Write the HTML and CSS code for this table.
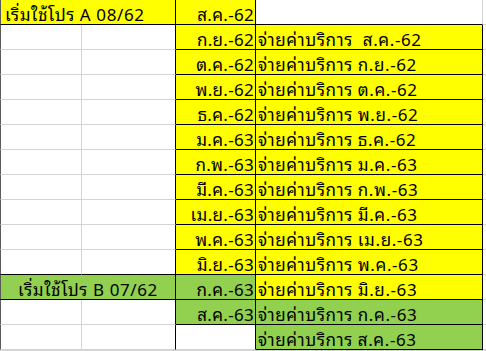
FILE: index.html
```html
<!DOCTYPE html>
<html lang="th">
<head>
<meta charset="utf-8">
<link rel="stylesheet" href="styles.css">
</head>
<body>
<div class="sheet">
  <div class="c first span2 yellow bb bk-r txt-left">เริ่มใช้โปร A 08/62</div>
  <div class="c yellow date bb bk-r">ส.ค.-62</div>
  <div class="c colD bb gray-r"></div>
  <div class="c colE"></div>

  <div class="c first"></div><div class="c bk-r"></div><div class="c yellow date bb bk-r">ก.ย.-62</div><div class="c yellow pay bb bk-r">จ่ายค่าบริการ  ส.ค.-62</div><div class="c colE"></div>
  <div class="c first"></div><div class="c bk-r"></div><div class="c yellow date bb bk-r">ต.ค.-62</div><div class="c yellow pay bb bk-r">จ่ายค่าบริการ ก.ย.-62</div><div class="c colE"></div>
  <div class="c first"></div><div class="c bk-r"></div><div class="c yellow date bb bk-r">พ.ย.-62</div><div class="c yellow pay bb bk-r">จ่ายค่าบริการ ต.ค.-62</div><div class="c colE"></div>
  <div class="c first"></div><div class="c bk-r"></div><div class="c yellow date bb bk-r">ธ.ค.-62</div><div class="c yellow pay bb bk-r">จ่ายค่าบริการ พ.ย.-62</div><div class="c colE"></div>
  <div class="c first"></div><div class="c bk-r"></div><div class="c yellow date bb bk-r">ม.ค.-63</div><div class="c yellow pay bb bk-r">จ่ายค่าบริการ ธ.ค.-62</div><div class="c colE"></div>
  <div class="c first"></div><div class="c bk-r"></div><div class="c yellow date bb bk-r">ก.พ.-63</div><div class="c yellow pay bb bk-r">จ่ายค่าบริการ ม.ค.-63</div><div class="c colE"></div>
  <div class="c first"></div><div class="c bk-r"></div><div class="c yellow date bb bk-r">มี.ค.-63</div><div class="c yellow pay bb bk-r">จ่ายค่าบริการ ก.พ.-63</div><div class="c colE"></div>
  <div class="c first"></div><div class="c bk-r"></div><div class="c yellow date bb bk-r">เม.ย.-63</div><div class="c yellow pay bb bk-r">จ่ายค่าบริการ มี.ค.-63</div><div class="c colE"></div>
  <div class="c first"></div><div class="c bk-r"></div><div class="c yellow date bb bk-r">พ.ค.-63</div><div class="c yellow pay bb bk-r">จ่ายค่าบริการ เม.ย.-63</div><div class="c colE"></div>
  <div class="c first bb"></div><div class="c bk-r bb"></div><div class="c yellow date bb bk-r">มิ.ย.-63</div><div class="c yellow pay bb bk-r">จ่ายค่าบริการ พ.ค.-63</div><div class="c colE"></div>

  <div class="c first span2 green bb bk-r txt-center">เริ่มใช้โปร B 07/62</div><div class="c green date bb bk-r">ก.ค.-63</div><div class="c yellow pay bb bk-r">จ่ายค่าบริการ มิ.ย.-63</div><div class="c colE"></div>
  <div class="c first"></div><div class="c bk-r"></div><div class="c green date bb bk-r">ส.ค.-63</div><div class="c green pay bb bk-r">จ่ายค่าบริการ ก.ค.-63</div><div class="c colE"></div>
  <div class="c first"></div><div class="c bk-r"></div><div class="c bk-r"></div><div class="c green pay bb bk-r">จ่ายค่าบริการ ส.ค.-63</div><div class="c colE"></div>
</div>
</body>
</html>
```
FILE: styles.css
```css
html, body {
  margin: 0;
  padding: 0;
  background: #ffffff;
}
.sheet {
  display: grid;
  grid-template-columns: 82px 94px 80px 227px 1fr;
  grid-auto-rows: 25px;
  width: 486px;
  border-bottom: 1px solid #d4d4d4;
  font-family: Tahoma, "Noto Sans Thai Looped", "Noto Sans Thai", "Noto Sans", sans-serif;
  font-size: 17px;
  letter-spacing: 0.6px;
  color: #000000;
}
.c {
  box-sizing: border-box;
  border-right: 1px solid #d4d4d4;
  border-bottom: 1px solid #d4d4d4;
  background: #ffffff;
  white-space: pre;
  overflow: hidden;
  display: flex;
  align-items: center;
  line-height: 1;
  padding-top: 2px;
}
.first { border-left: 1px solid #5a5a5a; }
.span2 { grid-column: span 2; }
.yellow { background: #ffff00; }
.green { background: #92d050; }
.bb { border-bottom-color: #000000; }
.bk-r { border-right-color: #000000; }
.gray-r { border-right-color: #d4d4d4; }
.colE { border-right: 0; }
.txt-left { padding-left: 4px; }
.txt-center { justify-content: center; }
.date { justify-content: flex-end; padding-right: 1px; letter-spacing: 0.3px; }
.pay { padding-left: 2px; }
```
